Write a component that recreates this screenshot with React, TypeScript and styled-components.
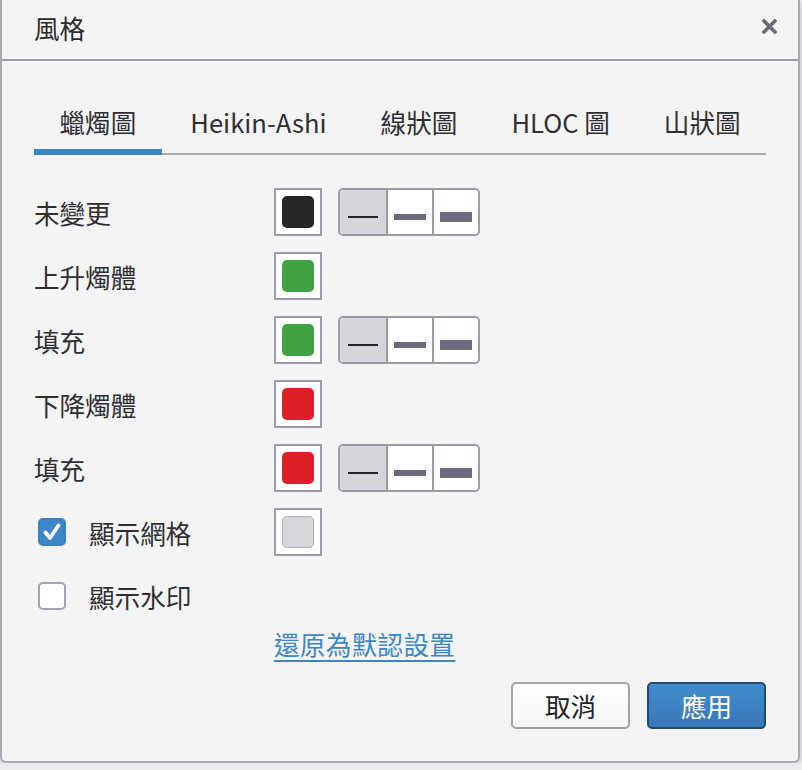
import styled, { createGlobalStyle } from "styled-components";

const GlobalStyle = createGlobalStyle`
body{
  margin:0;
  background:#ebebee;
  font-family:"Noto Sans CJK TC","Noto Sans",sans-serif;
  color:#2f2f33;
}
`;

const Dialog = styled.div`
box-sizing:border-box;
width:800px;
height:763px;
background:#f4f4f4;
border:2px solid #aaa9b4;
border-top:none;
border-radius:0 0 6px 6px;
box-shadow:0 2px 6px rgba(0,0,0,0.18);
display:flex;
flex-direction:column;
`;

const Header = styled.header`
height:59px;
display:flex;
align-items:center;
justify-content:space-between;
padding:0 20px 0 32px;
border-bottom:2px solid #9e9daa;
`;

const Title = styled.h1`
margin:0 0 4px;
font-size:25.6px;
font-weight:400;
line-height:55px;
color:#2b2b2f;
`;

const Close = styled.button`
border:none;
background:none;
padding:0;
width:17px;
height:17px;
margin-top:-6px;
display:flex;
align-items:center;
justify-content:center;
cursor:pointer;
`;

const Body = styled.div`
flex:1;
padding:0 32px;
display:flex;
flex-direction:column;
`;

const TabList = styled.div`
display:flex;
gap:3px;
margin-top:34px;
border-bottom:2px solid #aaaaac;
`;

const Tab = styled.div<{ $active?: boolean }>`
height:54px;
line-height:54px;
padding:0 25.5px;
font-size:25.6px;
color:#2f2f33;
white-space:nowrap;
border-bottom:6px solid ${p => (p.$active ? "#3c86c7" : "transparent")};
margin-bottom:-2px;
`;

const Rows = styled.div`
margin-top:25px;
display:flex;
flex-direction:column;
`;

const Row = styled.div`
height:64px;
display:flex;
align-items:center;
`;

const Label = styled.div`
width:240px;
flex-shrink:0;
font-size:25.6px;
display:flex;
align-items:center;
`;

const Check = styled.span<{ $on?: boolean }>`
box-sizing:border-box;
width:28px;
height:28px;
margin:0 23px 0 4px;
border-radius:5px;
border:2px solid ${p => (p.$on ? "#3a84c4" : "#a3a2ae")};
background:${p => (p.$on ? "#3d87c8" : "#fff")};
display:flex;
align-items:center;
justify-content:center;
`;

const Swatch = styled.div`
box-sizing:border-box;
width:48px;
height:48px;
border:2px solid #9c9ba8;
background:#fff;
display:flex;
align-items:center;
justify-content:center;
`;

const Chip = styled.div<{ $color: string; $edge?: string }>`
box-sizing:border-box;
width:32px;
height:32px;
border-radius:5px;
background:${p => p.$color};
border:${p => (p.$edge ? `1px solid ${p.$edge}` : "none")};
`;

const Segments = styled.div`
box-sizing:border-box;
margin-left:16px;
height:48px;
display:flex;
border:2px solid #9c9ba8;
border-radius:5px;
overflow:hidden;
background:#fff;
`;

const Segment = styled.div<{ $selected?: boolean }>`
width:46px;
padding-top:10px;
box-sizing:border-box;
display:flex;
align-items:center;
justify-content:center;
background:${p => (p.$selected ? "#d6d6da" : "#fff")};
& + &{
  border-left:2px solid #9c9ba8;
}
`;

const Stroke = styled.span<{ $w: number; $h: number; $dark?: boolean }>`
display:block;
width:${p => p.$w}px;
height:${p => p.$h}px;
background:${p => (p.$dark ? "#242426" : "#6c6b7e")};
`;

const Reset = styled.a`
align-self:flex-start;
margin-left:240px;
line-height:32px;
font-size:25.6px;
letter-spacing:0.3px;
color:#3c86c7;
text-decoration:underline;
text-decoration-thickness:2px;
text-underline-offset:5px;
cursor:pointer;
`;

const Actions = styled.div`
display:flex;
justify-content:flex-end;
gap:17px;
margin-top:22px;
`;

const Button = styled.button<{ $primary?: boolean }>`
box-sizing:border-box;
width:119px;
height:47px;
border-radius:5px;
font-family:inherit;
font-size:25.6px;
padding:0;
cursor:pointer;
color:${p => (p.$primary ? "#fff" : "#222")};
border:2px solid ${p => (p.$primary ? "#1f4b74" : "#a3a2ae")};
background:${p => (p.$primary ? "linear-gradient(#418ccc,#3778b7)" : "linear-gradient(#fff,#f6f6f6)")};
`;

const lineStyles = () => (
  <Segments>
    <Segment $selected><Stroke $w={30} $h={2} $dark /></Segment>
    <Segment><Stroke $w={32} $h={6} /></Segment>
    <Segment><Stroke $w={32} $h={10} /></Segment>
  </Segments>
);

const rows = [
  { label: "未變更", color: "#262628", lines: true },
  { label: "上升燭體", color: "#41a041", lines: false },
  { label: "填充", color: "#41a041", lines: true },
  { label: "下降燭體", color: "#dd1f27", lines: false },
  { label: "填充", color: "#dd1f27", lines: true },
];

const tabs = ["蠟燭圖", "Heikin-Ashi", "線狀圖", "HLOC 圖", "山狀圖"];

export default function App() {
  return (
    <>
      <GlobalStyle />
      <Dialog>
        <Header>
          <Title>風格</Title>
          <Close aria-label="close">
            <svg width="15" height="15" viewBox="0 0 15 15">
              <path d="M2 2L13 13M13 2L2 13" stroke="#6c6b7a" strokeWidth="3.6" strokeLinecap="square" />
            </svg>
          </Close>
        </Header>
        <Body>
          <TabList>
            {tabs.map((t, i) => (
              <Tab key={t} $active={i === 0}>{t}</Tab>
            ))}
          </TabList>
          <Rows>
            {rows.map((r, i) => (
              <Row key={i}>
                <Label>{r.label}</Label>
                <Swatch><Chip $color={r.color} /></Swatch>
                {r.lines && lineStyles()}
              </Row>
            ))}
            <Row>
              <Label>
                <Check $on>
                  <svg width="20" height="18" viewBox="0 0 20 18">
                    <path d="M3.5 9.5L8 15L16.5 2.5" fill="none" stroke="#fff" strokeWidth="3.8" strokeLinecap="round" strokeLinejoin="round" />
                  </svg>
                </Check>
                顯示網格
              </Label>
              <Swatch><Chip $color="#d7d7db" $edge="#b3b2bc" /></Swatch>
            </Row>
            <Row>
              <Label>
                <Check />
                顯示水印
              </Label>
            </Row>
          </Rows>
          <Reset>還原為默認設置</Reset>
          <Actions>
            <Button>取消</Button>
            <Button $primary>應用</Button>
          </Actions>
        </Body>
      </Dialog>
    </>
  );
}
